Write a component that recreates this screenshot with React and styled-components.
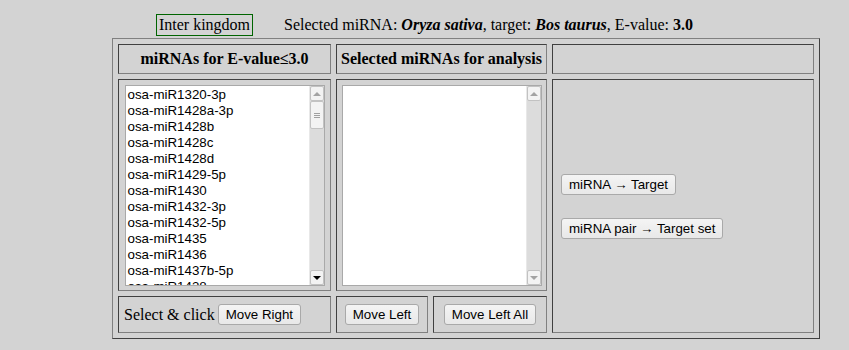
import styled, { createGlobalStyle } from "styled-components";

const DARK = "#404040";
const MID = "#808080";

const mirnas = [
  "osa-miR1320-3p",
  "osa-miR1428a-3p",
  "osa-miR1428b",
  "osa-miR1428c",
  "osa-miR1428d",
  "osa-miR1429-5p",
  "osa-miR1430",
  "osa-miR1432-3p",
  "osa-miR1432-5p",
  "osa-miR1435",
  "osa-miR1436",
  "osa-miR1437b-5p",
  "osa-miR1438",
];

function ScrollBar({ thumb, upOn, downOn }) {
  return (
    <StyledScroll>
      <ScrollButton>
        <Arrow $dir="up" $on={upOn} />
      </ScrollButton>
      <Track>
        {thumb && (
          <Thumb>
            <Grip />
          </Thumb>
        )}
      </Track>
      <ScrollButton>
        <Arrow $dir="down" $on={downOn} />
      </ScrollButton>
    </StyledScroll>
  );
}

function ListBox({ items, thumb, downOn }) {
  return (
    <StyledList>
      <Options>
        {items.map((m) => (
          <Option key={m}>{m}</Option>
        ))}
      </Options>
      <ScrollBar thumb={thumb} downOn={downOn} />
    </StyledList>
  );
}

export default function App() {
  return (
    <Page>
      <GlobalStyle />
      <TitleBar>
        <KingdomTag>Inter kingdom</KingdomTag>
        <span>
          Selected miRNA: <b><i>Oryza sativa</i></b>, target:{" "}
          <b><i>Bos taurus</i></b>, E-value: <b>3.0</b>
        </span>
      </TitleBar>
      <Board>
        <HeadCell>miRNAs for E-value≤3.0</HeadCell>
        <HeadCell $span={2}>Selected miRNAs for analysis</HeadCell>
        <HeadCell />
        <ListCell>
          <ListBox items={mirnas} thumb downOn />
        </ListCell>
        <ListCell $span={2}>
          <ListBox items={[]} />
        </ListCell>
        <ActionCell>
          <Btn>miRNA → Target</Btn>
          <Btn>miRNA pair → Target set</Btn>
        </ActionCell>
        <FootCell>
          <span>Select &amp; click</span>
          <Btn>Move Right</Btn>
        </FootCell>
        <FootCell $center>
          <Btn>Move Left</Btn>
        </FootCell>
        <FootCell $center>
          <Btn>Move Left All</Btn>
        </FootCell>
      </Board>
    </Page>
  );
}

const GlobalStyle = createGlobalStyle`
  body {
    margin: 0;
    background: #d3d3d3;
    color: #000;
    font-family: "Liberation Serif", "Times New Roman", serif;
    font-size: 16px;
  }
`;

const Page = styled.div`
  padding-top: 14px;
`;

const TitleBar = styled.div`
  display: flex;
  justify-content: center;
  align-items: center;
  gap: 31px;
  height: 22px;
  line-height: 18px;
`;

const KingdomTag = styled.span`
  border: 1px solid #006400;
  padding: 1px 2px;
`;

const Board = styled.div`
  display: grid;
  grid-template-columns: 213px 92px 114px 262px;
  grid-template-rows: 30px 212px 37px;
  gap: 5px;
  width: fit-content;
  margin: 2px 0 0 112px;
  padding: 5px;
  border: 1px solid;
  border-color: ${MID} ${DARK} ${DARK} ${MID};
`;

const Cell = styled.div`
  box-sizing: border-box;
  grid-column: span ${(p) => p.$span || 1};
  border: 1px solid;
  border-color: ${DARK} ${MID} ${MID} ${DARK};
`;

const HeadCell = styled(Cell)`
  display: flex;
  align-items: center;
  justify-content: center;
  font-weight: bold;
`;

const ListCell = styled(Cell)`
  display: flex;
  justify-content: center;
  padding-top: 5px;
`;

const ActionCell = styled(Cell)`
  grid-row: span 2;
  display: flex;
  flex-direction: column;
  justify-content: center;
  align-items: flex-start;
  gap: 23px;
  padding: 0 0 0 8px;
`;

const FootCell = styled(Cell)`
  display: flex;
  align-items: center;
  justify-content: ${(p) => (p.$center ? "center" : "flex-start")};
  gap: 3px;
  padding: 0 5px;
  white-space: nowrap;
`;

const Btn = styled.button`
  height: 21px;
  padding: 0 7px;
  font-family: "Liberation Sans", Arial, sans-serif;
  font-size: 13.33px;
  color: #000;
  background: linear-gradient(#f4f4f4, #e8e8e8);
  border: 1px solid #a9a9a9;
  border-radius: 3px;
  white-space: nowrap;
`;

const StyledList = styled.div`
  display: flex;
  box-sizing: border-box;
  width: 200px;
  height: 201px;
  background: #fff;
  border: 1px solid #a9a9a9;
  overflow: hidden;
`;

const Options = styled.div`
  flex: 1;
  padding-top: 1px;
  overflow: hidden;
  font-family: "Liberation Sans", Arial, sans-serif;
  font-size: 13.33px;
  line-height: 16px;
`;

const Option = styled.div`
  padding: 0 2px;
  white-space: nowrap;
`;

const StyledScroll = styled.div`
  display: flex;
  flex-direction: column;
  width: 15px;
  background: #dcdcdc;
  border-left: 1px solid #e8e8e8;
  box-sizing: border-box;
`;

const ScrollButton = styled.div`
  display: flex;
  align-items: center;
  justify-content: center;
  height: 15px;
  box-sizing: border-box;
  background: #f3f3f3;
  border: 1px solid #c2c2c2;
  border-radius: 2px;
`;

const Arrow = styled.span`
  width: 0;
  height: 0;
  border-left: 4px solid transparent;
  border-right: 4px solid transparent;
  ${(p) =>
    p.$dir === "up"
      ? `border-bottom: 4px solid ${p.$on ? "#000" : "#a3a3a3"};`
      : `border-top: 4px solid ${p.$on ? "#000" : "#a3a3a3"};`}
`;

const Track = styled.div`
  flex: 1;
`;

const Thumb = styled.div`
  display: flex;
  align-items: center;
  justify-content: center;
  height: 28px;
  box-sizing: border-box;
  background: #f3f3f3;
  border: 1px solid #c2c2c2;
  border-radius: 2px;
`;

const Grip = styled.div`
  width: 6px;
  height: 5px;
  background: repeating-linear-gradient(#a0a0a0 0 1px, transparent 1px 2px);
`;
